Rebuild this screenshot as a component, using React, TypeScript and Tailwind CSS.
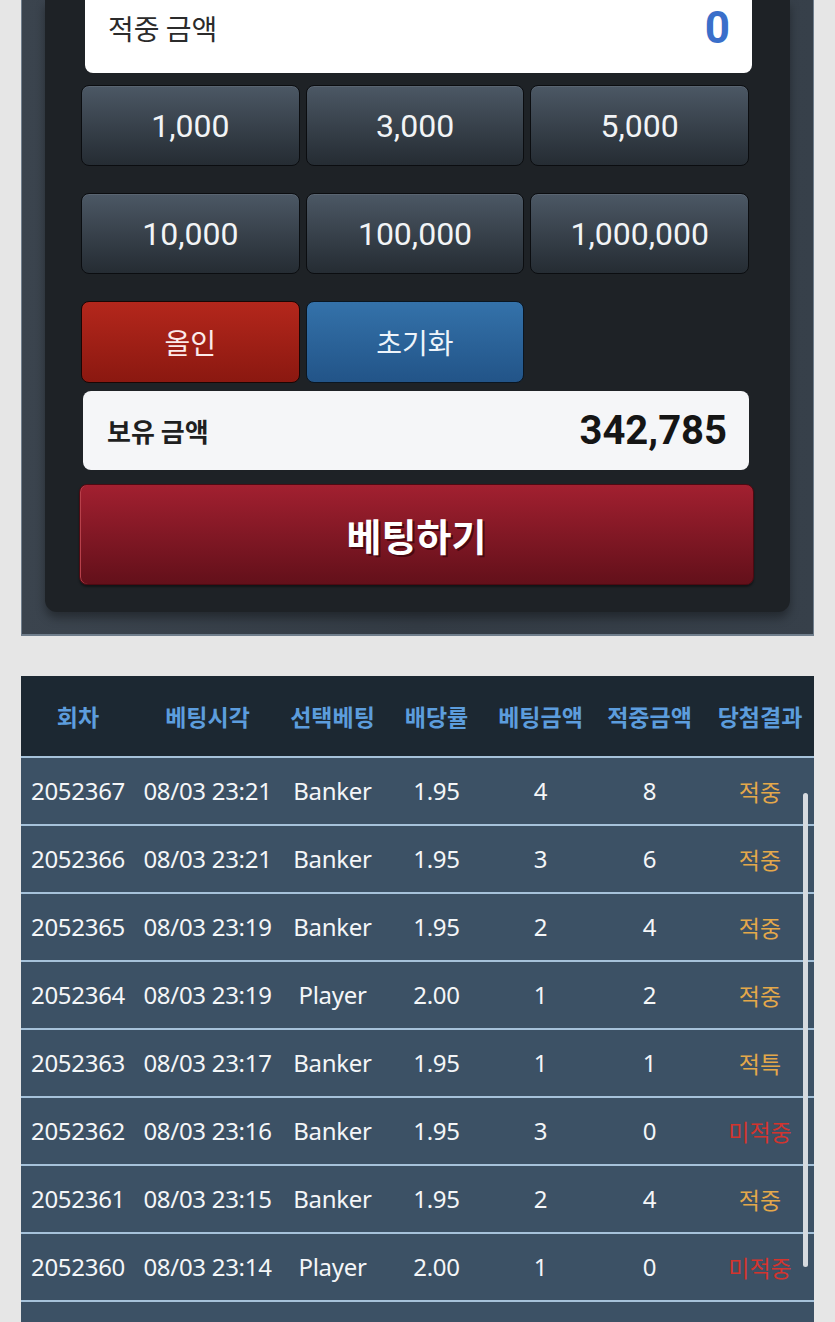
const amounts = [
  ["1,000", "3,000", "5,000"],
  ["10,000", "100,000", "1,000,000"],
];

type Row = {
  round: string;
  time: string;
  pick: string;
  odds: string;
  bet: string;
  win: string;
  result: string;
};

const rows: Row[] = [
  { round: "2052367", time: "08/03 23:21", pick: "Banker", odds: "1.95", bet: "4", win: "8", result: "적중" },
  { round: "2052366", time: "08/03 23:21", pick: "Banker", odds: "1.95", bet: "3", win: "6", result: "적중" },
  { round: "2052365", time: "08/03 23:19", pick: "Banker", odds: "1.95", bet: "2", win: "4", result: "적중" },
  { round: "2052364", time: "08/03 23:19", pick: "Player", odds: "2.00", bet: "1", win: "2", result: "적중" },
  { round: "2052363", time: "08/03 23:17", pick: "Banker", odds: "1.95", bet: "1", win: "1", result: "적특" },
  { round: "2052362", time: "08/03 23:16", pick: "Banker", odds: "1.95", bet: "3", win: "0", result: "미적중" },
  { round: "2052361", time: "08/03 23:15", pick: "Banker", odds: "1.95", bet: "2", win: "4", result: "적중" },
  { round: "2052360", time: "08/03 23:14", pick: "Player", odds: "2.00", bet: "1", win: "0", result: "미적중" },
  { round: "2052359", time: "08/03 23:13", pick: "Banker", odds: "1.95", bet: "1", win: "2", result: "적중" },
];

const cols = ["w-[114px]", "w-[145px]", "w-[105px]", "w-[103px]", "w-[105px]", "w-[113px]", "w-[108px]"];
const heads = ["회차", "베팅시각", "선택베팅", "배당률", "베팅금액", "적중금액", "당첨결과"];

function AmountButton({ label }: { label: string }) {
  return (
    <button className="flex h-[81px] items-center justify-center rounded-[8px] border border-[#0b0d10] bg-gradient-to-b from-[#4c5865] to-[#252c33] font-['Roboto',sans-serif] text-[32px] text-[#f2f4f6] shadow-[inset_0_1px_0_rgba(255,255,255,0.08)]">
      {label}
    </button>
  );
}

export default function App() {
  const kr = "font-['Noto_Sans_CJK_KR','Noto_Sans',sans-serif]";
  return (
    <div className={`min-h-screen bg-[#e6e6e6] pb-10 ${kr}`}>
      {/* betting panel */}
      <div className="mx-[21px] w-[793px] border-x border-b-2 border-[#707e8c] bg-gradient-to-r from-[#3b444e] via-[#333b44] to-[#37404a] px-[23px] pb-[22px]">
        <div className="rounded-b-[12px] bg-[#1e2226] pb-[27px] pl-[36px] pr-[41px] shadow-[0_6px_10px_rgba(0,0,0,0.35)]">
          <div className="ml-[4px] flex h-[73px] w-[667px] items-center justify-between rounded-b-[8px] bg-white pb-[18px] pl-[23px] pr-[22px]">
            <span className="text-[28px] text-[#2b2b2b]">적중 금액</span>
            <span className="font-['Roboto',sans-serif] text-[44px] font-bold leading-none text-[#3a6fca]">0</span>
          </div>

          <div className="mt-[12px] flex flex-col gap-[27px]">
            {amounts.map((line, i) => (
              <div key={i} className="grid grid-cols-3 gap-[6px]">
                {line.map((a) => (
                  <AmountButton key={a} label={a} />
                ))}
              </div>
            ))}
            <div className="grid grid-cols-3 gap-[6px]">
              <button className="flex h-[82px] items-center justify-center rounded-[8px] border border-[#1a0604] bg-gradient-to-b from-[#b4271c] to-[#8b1810] text-[28px] text-[#fbeaea]">
                올인
              </button>
              <button className="flex h-[82px] items-center justify-center rounded-[8px] border border-[#0a1622] bg-gradient-to-b from-[#3472aa] to-[#225488] text-[28px] text-[#eef4fa]">
                초기화
              </button>
            </div>
          </div>

          <div className="ml-[2px] mt-[8px] flex h-[79px] w-[666px] items-center justify-between rounded-[8px] bg-[#f5f6f8] pl-[24px] pr-[22px]">
            <span className="text-[26px] font-bold text-[#1f1f1f]">보유 금액</span>
            <span className="font-['Roboto',sans-serif] text-[40px] font-bold text-[#151515]">342,785</span>
          </div>

          <button className="-ml-[2px] mt-[14px] flex h-[101px] w-[675px] items-center justify-center rounded-[8px] border border-[#4d0a12] bg-gradient-to-b from-[#a22030] to-[#63101a] text-[38px] font-bold text-white shadow-[inset_1px_0_0_#b8404a,0_2px_2px_rgba(0,0,0,0.4)] [text-shadow:2px_2px_0_#4a0810]">
            베팅하기
          </button>
        </div>
      </div>

      {/* history table */}
      <div className="relative mx-[21px] mt-[40px] w-[793px]">
        <div className="flex h-[80px] items-center bg-[#1c2832]">
          {heads.map((h, i) => (
            <div key={h} className={`${cols[i]} text-center text-[23px] font-bold text-[#5c9ddd]`}>
              {h}
            </div>
          ))}
        </div>
        {rows.map((r) => {
          const cells = [r.round, r.time, r.pick, r.odds, r.bet, r.win];
          return (
            <div key={r.round} className="flex h-[68px] items-center border-t-2 border-[#a6c2da] bg-[#3c5165]">
              {cells.map((c, i) => (
                <div key={i} className={`${cols[i]} text-center font-['Noto_Sans',sans-serif] text-[24px] tracking-[-0.3px] text-[#f4f6f8]`}>
                  {c}
                </div>
              ))}
              <div
                className={`${cols[6]} text-center text-[23px] ${
                  r.result === "미적중" ? "text-[#d2342e]" : "text-[#e4a84a]"
                }`}
              >
                {r.result}
              </div>
            </div>
          );
        })}
        <div className="absolute left-[782px] top-[117px] h-[474px] w-[5px] rounded-full bg-[#d6dadf]" />
      </div>
    </div>
  );
}
